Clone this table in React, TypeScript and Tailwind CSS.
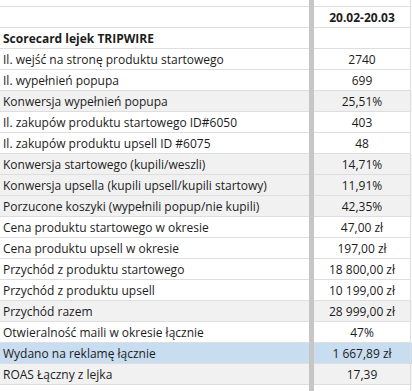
import React from "react";

type Row = {
  label: string;
  value: string;
  bg?: "gray" | "blue";
  bold?: boolean;
};

const rows: Row[] = [
  { label: "", value: "20.02-20.03", bold: true },
  { label: "Scorecard lejek TRIPWIRE", value: "", bold: true },
  { label: "Il. wejść na stronę produktu startowego", value: "2740" },
  { label: "Il. wypełnień popupa", value: "699" },
  { label: "Konwersja wypełnień popupa", value: "25,51%", bg: "gray" },
  { label: "Il. zakupów produktu startowego ID#6050", value: "403" },
  { label: "Il. zakupów produktu upsell ID #6075", value: "48" },
  { label: "Konwersja startowego (kupili/weszli)", value: "14,71%", bg: "gray" },
  { label: "Konwersja upsella (kupili upsell/kupili startowy)", value: "11,91%", bg: "gray" },
  { label: "Porzucone koszyki (wypełnili popup/nie kupili)", value: "42,35%", bg: "gray" },
  { label: "Cena produktu startowego w okresie", value: "47,00 zł" },
  { label: "Cena produktu upsell w okresie", value: "197,00 zł" },
  { label: "Przychód z produktu startowego", value: "18 800,00 zł" },
  { label: "Przychód z produktu upsell", value: "10 199,00 zł" },
  { label: "Przychód razem", value: "28 999,00 zł", bg: "gray" },
  { label: "Otwieralność maili w okresie łącznie", value: "47%" },
  { label: "Wydano na reklamę łącznie", value: "1 667,89 zł", bg: "blue" },
  { label: "ROAS Łączny z lejka", value: "17,39", bg: "gray" },
];

function bgClass(bg?: "gray" | "blue") {
  if (bg === "gray") return "bg-[#f1f1f1]";
  if (bg === "blue") return "bg-[#c9ddf0]";
  return "bg-white";
}

function SheetRow({ row }: { row: Row }) {
  const weight = row.bold ? "font-bold" : "font-normal";
  return (
    <div className={`flex h-[21px] ${bgClass(row.bg)}`}>
      <div
        className={`w-[309px] shrink-0 overflow-hidden whitespace-nowrap border-b border-[#dedede] pl-[3px] leading-[21px] ${weight}`}
      >
        {row.label}
      </div>
      <div className="w-[5px] shrink-0 bg-[#c6c6c6]" />
      <div
        className={`w-[97px] shrink-0 whitespace-nowrap border-b border-r border-[#dedede] text-center leading-[21px] ${weight}`}
      >
        {row.value}
      </div>
    </div>
  );
}

export default function App() {
  return (
    <div
      className="h-[391px] w-[412px] overflow-hidden bg-white text-[12px] text-[#1c1c1c]"
      style={{ fontFamily: '"Open Sans", "Noto Sans", sans-serif' }}
    >
      {/* partial row cut off at the top */}
      <div className="flex h-[7px]">
        <div className="w-[309px] shrink-0 border-b border-[#dedede]" />
        <div className="w-[5px] shrink-0 bg-[#c6c6c6]" />
        <div className="w-[97px] shrink-0 border-b border-r border-[#dedede]" />
      </div>

      {rows.map((row, i) => (
        <SheetRow key={i} row={row} />
      ))}

      {/* partial row cut off at the bottom */}
      <div className="flex h-[21px]">
        <div className="w-[309px] shrink-0" />
        <div className="w-[5px] shrink-0 bg-[#c6c6c6]" />
        <div className="w-[97px] shrink-0 border-r border-[#dedede]" />
      </div>
    </div>
  );
}
